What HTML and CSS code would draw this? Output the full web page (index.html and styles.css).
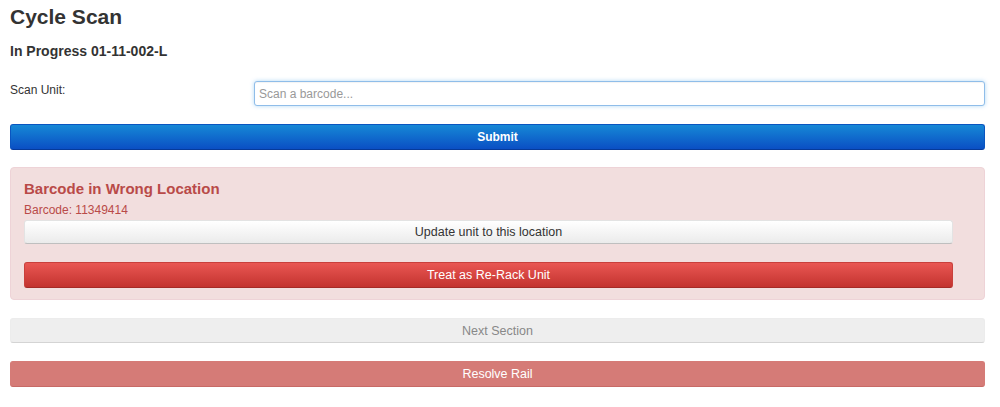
FILE: index.html
```html
<!DOCTYPE html>
<html>
<head>
<meta charset="utf-8">
<link rel="stylesheet" href="styles.css">
</head>
<body>
<div class="page">
  <h1 class="title">Cycle Scan</h1>
  <h2 class="subtitle">In Progress 01-11-002-L</h2>
  <div class="scan-row">
    <label class="scan-label">Scan Unit:</label>
    <input class="scan-input" type="text" placeholder="Scan a barcode...">
  </div>
  <button class="btn btn-primary">Submit</button>
  <div class="alert">
    <h4 class="alert-title">Barcode in Wrong Location</h4>
    <div class="alert-text">Barcode: 11349414</div>
    <button class="btn btn-default btn-update">Update unit to this location</button>
    <button class="btn btn-danger btn-rerack">Treat as Re-Rack Unit</button>
  </div>
  <button class="btn btn-disabled btn-next">Next Section</button>
  <button class="btn btn-danger-disabled btn-resolve">Resolve Rail</button>
</div>
</body>
</html>
```

FILE: styles.css
```css
* { box-sizing: border-box; }
html, body { margin: 0; padding: 0; background: #ffffff; }
body {
  font-family: "Liberation Sans", Arial, Helvetica, sans-serif;
  color: #333333;
}
.page {
  display: flex;
  flex-direction: column;
  width: 975px;
  margin-left: 10px;
  padding-top: 4px;
}
.title {
  margin: 0;
  font-size: 21px;
  line-height: 26px;
  font-weight: bold;
  color: #333;
}
.subtitle {
  margin: 12px 0 0;
  font-size: 14px;
  line-height: 18px;
  font-weight: bold;
  color: #333;
}
.scan-row {
  display: flex;
  align-items: flex-start;
  margin-top: 21px;
}
.scan-label {
  width: 244px;
  flex: none;
  font-size: 12px;
  line-height: 18px;
  color: #333;
}
.scan-input {
  flex: 1;
  height: 25px;
  margin: 0;
  padding: 0 4px;
  font-family: "Liberation Sans", Arial, sans-serif;
  font-size: 12px;
  color: #555;
  border: 1px solid #8fbde9;
  border-radius: 3px;
  box-shadow: inset 0 1px 1px rgba(0,0,0,.05), 0 0 4px rgba(82,168,236,.45);
  outline: none;
}
.scan-input::placeholder { color: #999; }
.btn {
  display: block;
  width: 100%;
  margin: 0;
  padding: 0;
  font-family: "Liberation Sans", Arial, sans-serif;
  font-size: 12.5px;
  text-align: center;
  border-radius: 3px;
  border: 1px solid transparent;
  cursor: pointer;
}
.btn-primary {
  margin-top: 18px;
  height: 26px;
  color: #fff;
  font-size: 12px;
  font-weight: bold;
  background: linear-gradient(to bottom, #1688d6, #0a4fc4);
  border-color: #0a55c0 #0a55c0 #063a9a;
}
.alert {
  margin-top: 17px;
  padding: 12px 31px 11px 13px;
  background: #f2dede;
  border: 1px solid #eed3d7;
  border-radius: 4px;
  color: #b94a48;
  display: flex;
  flex-direction: column;
}
.alert-title {
  margin: 0;
  font-size: 15px;
  line-height: 18px;
  font-weight: bold;
  color: #b94a48;
}
.alert-text {
  margin-top: 4px;
  font-size: 12px;
  line-height: 16px;
}
.btn-default {
  color: #333;
  background: linear-gradient(to bottom, #ffffff, #ebebeb);
  border-color: #e3e3e3 #e3e3e3 #bfbfbf;
}
.btn-update {
  margin-top: 2px;
  height: 24px;
}
.btn-danger {
  color: #fff;
  background: linear-gradient(to bottom, #e95753, #c3332f);
  border-color: #c9403c #c9403c #a52a26;
}
.btn-rerack {
  margin-top: 18px;
  height: 26px;
}
.btn-disabled {
  color: #888;
  background: #eeeeee;
  border-color: #ececec #ececec #d4d4d4;
  cursor: default;
}
.btn-next {
  margin-top: 18px;
  height: 25px;
}
.btn-danger-disabled {
  color: #fff;
  background: #d57b77;
  border-color: #d57b77 #d57b77 #c76a66;
  cursor: default;
}
.btn-resolve {
  margin-top: 18px;
  height: 26px;
}
```
